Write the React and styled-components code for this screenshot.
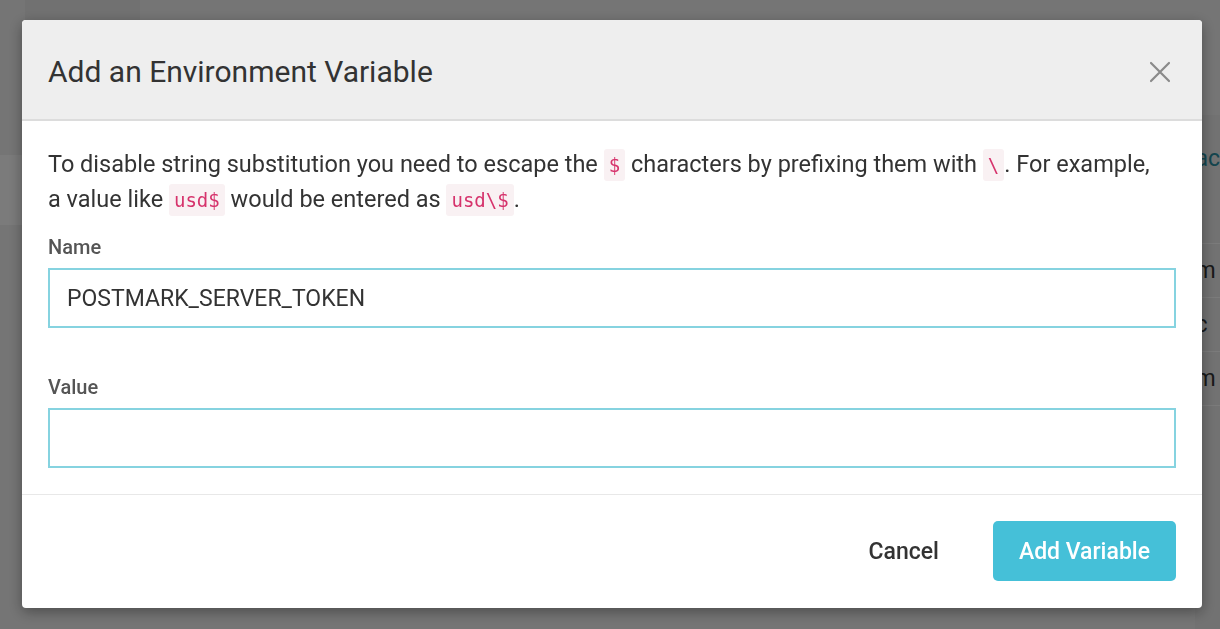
import React from 'react';
import styled, { createGlobalStyle } from 'styled-components';

const GlobalStyle = createGlobalStyle`
  html, body {
    margin: 0;
    padding: 0;
    height: 100%;
    overflow: hidden;
    font-family: Roboto, "Noto Sans", "Liberation Sans", sans-serif;
  }
  * { box-sizing: border-box; }
`;

// page that sits dimmed behind the dialog
const Page = styled.div`
  display: flex;
  height: 629px;
  width: 1220px;
  background: #ebebeb;
`;

const PageMain = styled.div`
  width: 1202px;
  display: flex;
  flex-direction: column;
`;

const TopStrip = styled.div`
  height: 20px;
  margin-left: 25px;
  width: 115px;
  background: #e2e2e2;
`;

const SideBlock = styled.div`
  margin-top: 135px;
  width: 22px;
  height: 70px;
  background: #f7f7f7;
`;

const PagePeek = styled.div`
  flex: 1;
  display: flex;
  flex-direction: column;
  padding-top: 115px;
`;

const PeekPanel = styled.div`
  flex: 1;
  background: #e4e4e4;
  display: flex;
  flex-direction: column;
`;

const PeekLink = styled.div`
  height: 128px;
  padding-top: 32px;
  font-size: 23px;
  line-height: 24px;
  color: #2a8a9c;
  white-space: nowrap;
`;

const PeekRow = styled.div`
  height: 54px;
  border-top: 1px solid #f6f6f6;
  display: flex;
  align-items: center;
  font-size: 23px;
  color: #333;
  white-space: nowrap;
`;

const Backdrop = styled.div`
  position: fixed;
  inset: 0;
  background: rgba(0, 0, 0, 0.5);
  display: flex;
  align-items: flex-start;
  padding: 20px 0 0 22px;
`;

const Dialog = styled.div`
  width: 1180px;
  background: #fff;
  border-radius: 4px;
  overflow: hidden;
  box-shadow: 0 4px 14px rgba(0, 0, 0, 0.35);
  color: #333;
`;

const Header = styled.div`
  height: 101px;
  background: #eeeeee;
  border-bottom: 2px solid #dcdcdc;
  display: flex;
  align-items: center;
  justify-content: space-between;
  padding: 4px 31px 0 26px;
`;

const Title = styled.h2`
  margin: 0;
  font-size: 30px;
  font-weight: 400;
  color: #333;
`;

const CloseButton = styled.button`
  border: 0;
  background: transparent;
  padding: 0;
  width: 22px;
  height: 22px;
  display: flex;
  align-items: center;
  justify-content: center;
  cursor: pointer;
`;

const Body = styled.div`
  padding: 26px 26px 26px 26px;
  border-bottom: 1px solid #e8e8e8;
`;

const Intro = styled.p`
  margin: 0 0 20px;
  padding-right: 8px;
  font-size: 23.5px;
  line-height: 34px;
  color: #333;
`;

const Code = styled.code`
  font-family: "DejaVu Sans Mono", "Liberation Mono", monospace;
  font-size: 19px;
  color: #d6336c;
  background: #f9f1f3;
  border-radius: 3px;
  padding: 5px 5px;
`;

const Field = styled.div`
  display: flex;
  flex-direction: column;
  gap: 10px;
  & + & {
    margin-top: 49px;
  }
`;

const Label = styled.label`
  font-size: 20px;
  line-height: 21px;
  font-weight: 500;
  color: #555;
`;

const Input = styled.input`
  height: 60px;
  width: 100%;
  border: 2px solid #86d3e0;
  border-radius: 0;
  padding: 0 17px;
  font-family: Roboto, "Noto Sans", sans-serif;
  font-size: 23px;
  color: #333;
  outline: none;
  background: #fff;
`;

const Footer = styled.div`
  display: flex;
  justify-content: flex-end;
  align-items: center;
  gap: 28px;
  padding: 26px 26px 27px;
`;

const Button = styled.button`
  height: 60px;
  border: 0;
  border-radius: 5px;
  padding: 0 26px;
  font-family: Roboto, "Noto Sans", sans-serif;
  font-size: 23px;
  font-weight: 500;
  cursor: pointer;
  background: ${p => (p.$primary ? '#45c0d8' : 'transparent')};
  color: ${p => (p.$primary ? '#fff' : '#333')};
`;

const CloseIcon = () => (
  <svg width="22" height="22" viewBox="0 0 22 22" fill="none">
    <path d="M2 2L20 20M20 2L2 20" stroke="#8a8a8a" strokeWidth="2.2" strokeLinecap="round" />
  </svg>
);

export default function App() {
  return (
    <>
      <GlobalStyle />
      <Page>
        <PageMain>
          <TopStrip />
          <SideBlock />
        </PageMain>
        <PagePeek>
          <PeekPanel>
            <PeekLink>ac</PeekLink>
            <PeekRow>m</PeekRow>
            <PeekRow>c</PeekRow>
            <PeekRow>m</PeekRow>
            <PeekRow />
          </PeekPanel>
        </PagePeek>
      </Page>
      <Backdrop>
        <Dialog>
          <Header>
            <Title>Add an Environment Variable</Title>
            <CloseButton aria-label="Close">
              <CloseIcon />
            </CloseButton>
          </Header>
          <Body>
            <Intro>
              To disable string substitution you need to escape the <Code>$</Code> characters by
              prefixing them with <Code>\</Code>. For example, a value like <Code>usd$</Code> would
              be entered as <Code>usd\$</Code>.
            </Intro>
            <Field>
              <Label>Name</Label>
              <Input defaultValue="POSTMARK_SERVER_TOKEN" />
            </Field>
            <Field>
              <Label>Value</Label>
              <Input defaultValue="" />
            </Field>
          </Body>
          <Footer>
            <Button>Cancel</Button>
            <Button $primary>Add Variable</Button>
          </Footer>
        </Dialog>
      </Backdrop>
    </>
  );
}
